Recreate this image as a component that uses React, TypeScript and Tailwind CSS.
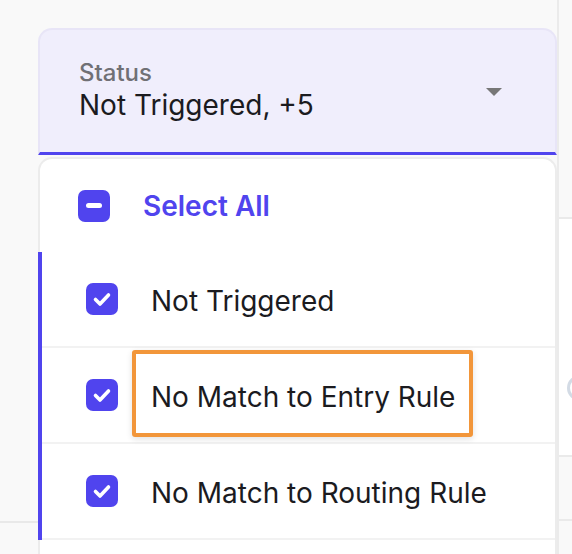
import React from 'react';

const options = ['Not Triggered', 'No Match to Entry Rule', 'No Match to Routing Rule'];

const CheckBox = ({ mode }: { mode: 'check' | 'minus' }) => (
  <span className="flex h-8 w-8 shrink-0 items-center justify-center rounded-[7px] bg-[#5044ee]">
    {mode === 'check' ? (
      <svg width="32" height="32" viewBox="0 0 32 32" fill="none">
        <path d="M9.5 16.5l4.5 4.5 8.5-9" stroke="white" strokeWidth="3.6" strokeLinecap="round" strokeLinejoin="round" />
      </svg>
    ) : (
      <span className="h-[5px] w-4 rounded-full bg-white" />
    )}
  </span>
);

export default function App() {
  return (
    <div
      className="relative h-[554px] w-[572px] overflow-hidden bg-[#f9f9f9]"
      style={{ fontFamily: 'Inter, "Noto Sans", sans-serif' }}
    >
      {/* page behind the dropdown */}
      <div className="flex h-full">
        <div className="w-[38px] shrink-0">
          <div className="h-[523px] border-b-2 border-[#e9e9e9]" />
        </div>
        <div className="flex-1" />
        <div className="w-[15px] shrink-0 border-l-2 border-[#ebebeb]">
          <div className="h-[219px] border-b-2 border-[#eaeaea]" />
          <div className="relative h-[238px] border-b-2 border-[#eaeaea] bg-white">
            <span className="absolute left-[8px] top-[156px] h-[26px] w-[26px] rounded-full border-[3px] border-[#d3dbe5]" />
          </div>
          <div className="h-[64px] border-b-2 border-[#eaeaea]" />
        </div>
      </div>

      {/* select + open menu */}
      <div className="absolute left-[38px] top-[28px] flex w-[519px] flex-col gap-[2px]">
        <div className="flex h-[127px] items-center justify-between rounded-t-[14px] border-x-2 border-t-2 border-b-[3px] border-[#e8e5f7] border-b-[#5044ee] bg-[#f0eefc] pl-[39px] pr-[53px]">
          <div className="flex flex-col">
            <span className="text-[24px] font-medium leading-[24px] text-[#707075]">Status</span>
            <span className="mt-[3px] text-[28px] leading-[34px] text-[#1b1b1f]">Not Triggered, +5</span>
          </div>
          <svg width="16" height="8" viewBox="0 0 16 8" className="mt-[2px]">
            <path d="M0 0h16L8 8z" fill="#777777" />
          </svg>
        </div>

        <div className="h-[420px] rounded-t-[14px] border-x-2 border-t-2 border-[#ececec] bg-white">
          <div className="flex h-[93px] items-center gap-[33px] pl-[38px]">
            <CheckBox mode="minus" />
            <span className="text-[28px] font-semibold text-[#5044ee]">Select All</span>
          </div>
          <div className="-ml-[2px] border-l-4 border-[#5044ee]">
            {options.map((o) => (
              <div key={o} className="flex h-[96px] items-center gap-[33px] border-b-2 border-[#f2f2f2] pl-[44px]">
                <CheckBox mode="check" />
                <span className="pt-[3px] text-[28px] text-[#1b1b1f]">{o}</span>
              </div>
            ))}
          </div>
        </div>
      </div>

      {/* highlight annotation */}
      <div className="absolute left-[132px] top-[350px] h-[87px] w-[341px] rounded-[3px] border-4 border-[#f2963a] shadow-[0_2px_6px_rgba(0,0,0,0.12)]" />
    </div>
  );
}
